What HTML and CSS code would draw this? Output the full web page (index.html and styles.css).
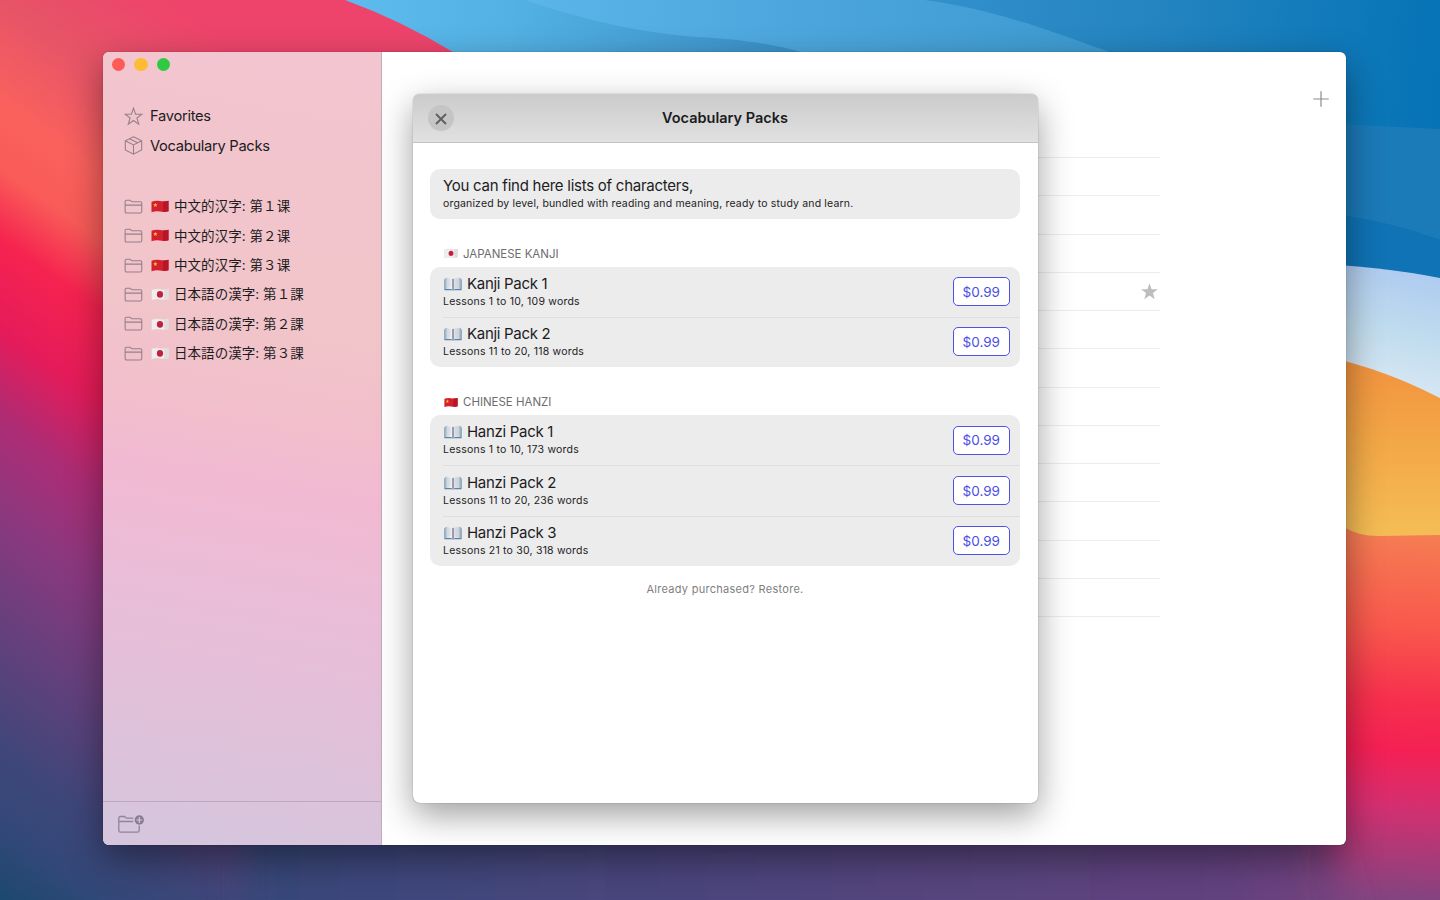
FILE: index.html
```html
<!DOCTYPE html>
<html lang="en">
<head>
<meta charset="utf-8">
<title>Vocabulary Packs</title>
<link rel="stylesheet" href="styles.css">
</head>
<body>
<svg class="defs" width="0" height="0" aria-hidden="true">
  <defs>
    <linearGradient id="page" x1="0" x2="1"><stop offset="0" stop-color="#8fa9c0"/><stop offset=".12" stop-color="#d3dae1"/><stop offset=".4" stop-color="#f4f3f6"/><stop offset=".5" stop-color="#a4a9b6"/><stop offset=".6" stop-color="#e2e2e8"/><stop offset=".88" stop-color="#ced5dd"/><stop offset="1" stop-color="#7f9cb8"/></linearGradient>
  </defs>
  <symbol id="star" viewBox="0 0 20 20"><path d="M10 1.2l2.2 6.3 6.7.1-5.3 4 1.9 6.5L10 14.2l-5.5 3.9 1.9-6.5-5.3-4 6.7-.1z"/></symbol>
  <symbol id="box" viewBox="0 0 20 20"><path d="M10 .8l8.600 4.200v9.700L10 19.200l-8.600-4.500V5zM1.400 5L10 9.400l8.600-4.400M10 9.400v9.800M5.600 2.900l8.700 4.300"/></symbol>
  <symbol id="folder" viewBox="0 0 20 16"><path d="M1.200 13V2.600Q1.200 1.200 2.600 1.200H6.400L8.400 2.800H17.200Q18.700 2.800 18.700 4.300V13Q18.700 14.600 17.200 14.600H2.700Q1.200 14.600 1.200 13zM1.200 6.300H18.700"/></symbol>
  <symbol id="cn" viewBox="0 0 18 13"><path d="M.5 1.800Q5 .2 9 1.100T17.500 .8V11.200Q13 12.400 9 11.600T.5 12.300z" fill="#d3202f"/><path d="M12 1.400V11.800Q14.500 12 17.500 11.200V.8Q14.500 1.500 12 1.400z" fill="#b81626"/><path d="M4.300 2.700l.6 1.500 1.600.1-1.200 1 .4 1.600-1.400-.8-1.300.9.4-1.700-1.200-1 1.500-.1z" fill="#f8c630"/></symbol>
  <symbol id="jp" viewBox="0 0 18 13"><path d="M.5 1.800Q5 .2 9 1.100T17.500 .8V11.200Q13 12.400 9 11.600T.5 12.300z" fill="#f3eeee" stroke="#d6cfd2" stroke-width=".4"/><path d="M13 1.300V11.700L17.500 11.200V.8z" fill="#e3dcdf"/><ellipse cx="9" cy="6.400" rx="3.100" ry="3.300" fill="#c51f40"/></symbol>
  <symbol id="book" viewBox="0 0 18 14"><path d="M.4 2.500L1.300 1.800V11.900Q6 11.200 9 12.600 12 11.200 16.700 11.900V1.800L17.600 2.500V13.200H10L9 13.600 8 13.200H.4z" fill="#5a83a4"/><path d="M1.300.9Q6 .4 9 1.900 12 .4 16.700.9V11.900Q12 11.300 9 12.600 6 11.300 1.300 11.900z" fill="url(#page)"/><path d="M3.600 3h3.600M3.600 5h3.600M3.600 7h3.600M3.600 9h3.600M10.900 3h3.500M10.900 5h3.500M10.900 7h3.500M10.900 9h3.500" stroke="#c3c8d2" stroke-width=".5"/><path d="M9 2V12.600" stroke="#5c6375" stroke-width=".7"/></symbol>
</svg>

<svg class="wallpaper" viewBox="0 0 1440 900" preserveAspectRatio="none" aria-hidden="true">
  <defs>
    <filter id="soft" x="-30%" y="-100%" width="160%" height="300%"><feGaussianBlur stdDeviation="18"/></filter>
    <linearGradient id="left" gradientUnits="userSpaceOnUse" x1="160" y1="0" x2="-470" y2="900">
      <stop offset="0" stop-color="#ee446b"/><stop offset=".084" stop-color="#e65467"/><stop offset=".16" stop-color="#fa615d"/><stop offset=".21" stop-color="#f95b58"/><stop offset=".262" stop-color="#f5234f"/><stop offset=".33" stop-color="#e51b5a"/><stop offset=".395" stop-color="#ad2c74"/><stop offset=".465" stop-color="#8c387f"/><stop offset=".54" stop-color="#6a3f7c"/><stop offset=".64" stop-color="#40467a"/><stop offset=".7" stop-color="#324878"/><stop offset=".755" stop-color="#1c486f"/>
    </linearGradient>
    <linearGradient id="foot" gradientUnits="userSpaceOnUse" x1="0" y1="0" x2="1440" y2="0"><stop offset="0" stop-color="#1b486f"/><stop offset=".12" stop-color="#334878"/><stop offset=".35" stop-color="#44467d"/><stop offset=".85" stop-color="#62437f"/><stop offset="1" stop-color="#85437e"/></linearGradient>
    <linearGradient id="right" gradientUnits="userSpaceOnUse" x1="1440" y1="530" x2="1420" y2="900"><stop offset="0" stop-color="#f57f53"/><stop offset=".27" stop-color="#f9574c"/><stop offset=".46" stop-color="#f6304d"/><stop offset=".6" stop-color="#f42054"/><stop offset=".75" stop-color="#d42f70"/><stop offset="1" stop-color="#83447f"/></linearGradient>
    <linearGradient id="sky" gradientUnits="userSpaceOnUse" x1="345" y1="0" x2="815" y2="60"><stop offset="0" stop-color="#5dbbee"/><stop offset=".35" stop-color="#53b1e3"/><stop offset="1" stop-color="#388dc5"/></linearGradient>
    <linearGradient id="sky2" gradientUnits="userSpaceOnUse" x1="525" y1="0" x2="1120" y2="50"><stop offset="0" stop-color="#5bb5ea"/><stop offset=".5" stop-color="#4ba5dc"/><stop offset="1" stop-color="#3c99cf"/></linearGradient>
    <linearGradient id="sky3" gradientUnits="userSpaceOnUse" x1="925" y1="0" x2="1440" y2="50"><stop offset="0" stop-color="#3390cc"/><stop offset=".5" stop-color="#2183bf"/><stop offset="1" stop-color="#0573b6"/></linearGradient>
    <linearGradient id="ice" gradientUnits="userSpaceOnUse" x1="1400" y1="265" x2="1370" y2="395"><stop offset="0" stop-color="#aecaf0"/><stop offset=".5" stop-color="#c0dcee"/><stop offset="1" stop-color="#dce9f5"/></linearGradient>
    <linearGradient id="gold" gradientUnits="userSpaceOnUse" x1="0" y1="365" x2="0" y2="535"><stop offset="0" stop-color="#f2943f"/><stop offset=".45" stop-color="#f3a746"/><stop offset="1" stop-color="#f5bd55"/></linearGradient>
  </defs>
  <rect width="1440" height="900" fill="url(#left)"/>
  <rect x="1310" y="380" width="130" height="520" fill="url(#right)"/>
  <path d="M240 780H1310Q1330 860 1370 1000H240z" fill="url(#foot)" filter="url(#soft)"/>
  <path d="M345 0Q400 20 453 52L900 300 1440 460V0z" fill="url(#sky)"/>
  <path d="M525 0C590 22 650 35 714 38Q765 41 808 54L900 100H1440V0z" fill="url(#sky2)"/>
  <path d="M925 0C1000 10 1060 35 1115 54L1250 120 1440 460V0z" fill="url(#sky3)"/>
  <path d="M1300 122L1440 129V240Q1390 222 1340 215H1300z" fill="#1b7ab8"/>
  <path d="M1300 210Q1390 219 1440 241V300H1300z" fill="#0f73b5"/>
  <path d="M1300 263Q1380 266 1440 278V420H1300z" fill="url(#ice)"/>
  <path d="M1300 352Q1370 362 1440 398V535L1378 536Q1358 536 1344 527L1300 500z" fill="url(#gold)"/>
</svg>

<main class="window">
  <aside class="sidebar">
    <div class="lights"><i class="light red"></i><i class="light yellow"></i><i class="light green"></i></div>
    <nav class="nav">
      <a class="item"><svg class="icon star"><use href="#star"/></svg><span class="label">Favorites</span></a>
      <a class="item"><svg class="icon"><use href="#box"/></svg><span class="label">Vocabulary Packs</span></a>
    </nav>
    <nav class="nav lists">
      <a class="item" lang="zh"><svg class="icon folder"><use href="#folder"/></svg><svg class="flag"><use href="#cn"/></svg><span class="cjk sc">中文的汉字: 第１课</span></a>
      <a class="item" lang="zh"><svg class="icon folder"><use href="#folder"/></svg><svg class="flag"><use href="#cn"/></svg><span class="cjk sc">中文的汉字: 第２课</span></a>
      <a class="item" lang="zh"><svg class="icon folder"><use href="#folder"/></svg><svg class="flag"><use href="#cn"/></svg><span class="cjk sc">中文的汉字: 第３课</span></a>
      <a class="item" lang="ja"><svg class="icon folder"><use href="#folder"/></svg><svg class="flag"><use href="#jp"/></svg><span class="cjk">日本語の漢字: 第１課</span></a>
      <a class="item" lang="ja"><svg class="icon folder"><use href="#folder"/></svg><svg class="flag"><use href="#jp"/></svg><span class="cjk">日本語の漢字: 第２課</span></a>
      <a class="item" lang="ja"><svg class="icon folder"><use href="#folder"/></svg><svg class="flag"><use href="#jp"/></svg><span class="cjk">日本語の漢字: 第３課</span></a>
    </nav>
    <footer class="side-foot">
      <svg class="add-folder" viewBox="0 0 28 20"><path d="M16.500 4.200H9.500L7.500 2.500H3.300Q1.800 2.500 1.800 4V16.500Q1.800 18.200 3.500 18.200H20.500Q22.200 18.200 22.200 16.500V11.500M1.800 7.500H16.200" fill="none" stroke="#93829a" stroke-width="1.300"/><circle cx="22.300" cy="6" r="4.700" fill="#8b7b91"/><path d="M22.300 3V9M19.300 6H25.300" stroke="#dac5da" stroke-width="1.200"/></svg>
    </footer>
  </aside>
  <section class="content">
    <div class="toolbar"><svg class="plus" viewBox="0 0 16 16"><path d="M8 .3V15.700M.3 8H15.700"/></svg></div>
    <div class="words">
      <div class="word"></div><div class="word"></div><div class="word"></div>
      <div class="word"><svg class="fav"><use href="#star"/></svg></div>
      <div class="word"></div><div class="word"></div><div class="word"></div><div class="word"></div><div class="word"></div><div class="word"></div><div class="word"></div><div class="word"></div>
    </div>
  </section>
  <section class="modal">
    <header class="modal-head">
      <span class="close"><svg viewBox="0 0 12 12"><path d="M1 1L11 11M11 1L1 11"/></svg></span>
      <h1 class="title">Vocabulary Packs</h1>
    </header>
    <div class="modal-body">
      <div class="card intro"><p class="lead">You can find here lists of characters,</p><p class="sub intro-sub">organized by level, bundled with reading and meaning, ready to study and learn.</p></div>
      <h2 class="group"><svg class="flag small"><use href="#jp"/></svg><span>JAPANESE KANJI</span></h2>
      <div class="card">
        <div class="pack"><div><p class="name"><svg class="book"><use href="#book"/></svg>Kanji Pack 1</p><p class="sub">Lessons 1 to 10, 109 words</p></div><button class="price">$0.99</button></div>
        <div class="pack"><div><p class="name"><svg class="book"><use href="#book"/></svg>Kanji Pack 2</p><p class="sub">Lessons 11 to 20, 118 words</p></div><button class="price">$0.99</button></div>
      </div>
      <h2 class="group"><svg class="flag small"><use href="#cn"/></svg><span>CHINESE HANZI</span></h2>
      <div class="card">
        <div class="pack"><div><p class="name"><svg class="book"><use href="#book"/></svg>Hanzi Pack 1</p><p class="sub">Lessons 1 to 10, 173 words</p></div><button class="price">$0.99</button></div>
        <div class="pack"><div><p class="name"><svg class="book"><use href="#book"/></svg>Hanzi Pack 2</p><p class="sub">Lessons 11 to 20, 236 words</p></div><button class="price">$0.99</button></div>
        <div class="pack"><div><p class="name"><svg class="book"><use href="#book"/></svg>Hanzi Pack 3</p><p class="sub">Lessons 21 to 30, 318 words</p></div><button class="price">$0.99</button></div>
      </div>
      <p class="restore">Already purchased? Restore.</p>
    </div>
  </section>
</main>
</body>
</html>
```
FILE: styles.css
```css
* { box-sizing: border-box; }
body { margin: 0; width: 1440px; height: 900px; overflow: hidden; padding: 52px 94px 55px 103px; font-family: Inter, "Liberation Sans", sans-serif; color: #1c1c1e; }
p, h1, h2 { margin: 0; font-weight: 400; }
.defs { position: absolute; }
.wallpaper { position: absolute; inset: 0; width: 1440px; height: 900px; }

.window { position: relative; display: flex; height: 793px; border-radius: 6px; background: #fff; box-shadow: 0 0 1px rgba(0,0,0,.6), 0 14px 36px rgba(0,0,0,.42); }

.sidebar { width: 279px; display: flex; flex-direction: column; border-right: 1px solid #c4abb8; border-radius: 6px 0 0 6px; background: linear-gradient(190deg, #f2c5d1 0%, #f2c5cd 15%, #f1c5c9 34%, #f2bfcc 45%, #f2bad2 54%, #eabdd8 68%, #e0c1da 84%, #d5c6dd 98%); }
.lights { display: flex; gap: 9px; padding: 5.5px 0 0 8.5px; height: 49.5px; }
.light { width: 13.5px; height: 13.5px; border-radius: 50%; }
.red { background: #fc5b57; }
.yellow { background: #fdbc33; }
.green { background: #30c944; }
.nav { display: flex; flex-direction: column; padding-left: 21px; }
.item { display: flex; align-items: center; height: 29.4px; }
.lists { padding-top: 31px; }
.icon { width: 19px; height: 19px; fill: none; stroke: #96808a; stroke-width: 1.15; margin-right: 7px; }
.star { margin-top: 1px; }
.folder { height: 15.5px; margin-top: 1px; }
.label { font-size: 14.7px; letter-spacing: -.3px; }
.flag { width: 18px; height: 13px; margin: 1px 5px 0 1px; }
.cjk { font-family: Inter, "Noto Sans CJK JP", sans-serif; font-size: 13.5px; letter-spacing: .05px; line-height: 20px; white-space: nowrap; padding-top: .5px; }
.sc { font-family: Inter, "Noto Sans CJK SC", sans-serif; }
.side-foot { margin-top: auto; height: 44.5px; border-top: 1px solid #bda9bf; padding: 12px 0 0 14px; }
.add-folder { display: block; width: 28px; height: 20px; }

.content { flex: 1; }
.toolbar { display: flex; justify-content: flex-end; padding: 39px 17px 0 0; height: 105px; }
.plus { width: 16px; height: 16px; fill: none; stroke: #8b8b8b; stroke-width: 1.2; }
.words { width: 592px; margin-left: 186px; border-top: 1px solid #ededed; }
.word { height: 38.25px; border-bottom: 1px solid #ededed; display: flex; justify-content: flex-end; align-items: center; }
.fav { width: 19px; height: 19px; fill: #bdbdbd; margin: 1px 1px 0 0; }

/* Dialog floats over the word list */
.modal { position: absolute; left: 310px; top: 42px; width: 625px; height: 709px; border-radius: 7px; background: #fff; box-shadow: 0 0 1px rgba(0,0,0,.6), 0 12px 34px rgba(0,0,0,.38); }
.modal-head { height: 49px; display: grid; grid-template-columns: 55px 1fr 55px; align-items: center; border-radius: 7px 7px 0 0; border-bottom: 1px solid #c3c3c3; background: linear-gradient(#cbcbcb, #e1e1e1); }
.close { width: 26px; height: 26px; margin-left: 15px; border-radius: 50%; background: #c5c5c5; display: flex; align-items: center; justify-content: center; padding-top: 2px; }
.close svg { width: 12px; height: 12px; fill: none; stroke: #5e5e5e; stroke-width: 1.8; }
.title { text-align: center; font-size: 14.5px; line-height: 20px; font-weight: 600; padding-bottom: 1px; margin-right: 1px; }
.modal-body { padding: 25.5px 18px 0 17px; }
.card { background: #ececec; border-radius: 10px; }
.intro { height: 50px; padding: 7px 13px; }
.lead, .name { font-size: 15px; line-height: 20px; letter-spacing: -.25px; }
.name { display: flex; align-items: center; letter-spacing: -.3px; }
.book { width: 18px; height: 14px; margin: 0 5px 0 1px; }
.sub { font-size: 10.5px; line-height: 16px; letter-spacing: .21px; white-space: nowrap; }
.intro-sub { letter-spacing: .16px; }
.group { display: flex; align-items: center; height: 18px; margin: 26px 0 4px 14px; font-size: 11.5px; color: #6d6d70; }
.card + .group { letter-spacing: -.02px; }
.small { width: 14px; height: 11px; margin: 0 5px 0 0; }
.pack { height: 50.3px; margin-left: 13px; padding: 0 10px 0 0; display: flex; justify-content: space-between; align-items: center; }
.pack + .pack { box-shadow: inset 0 1px #dedede; }
.price { width: 57.5px; height: 29px; padding: 0; border: 1px solid #4f52e4; border-radius: 5px; background: #fff; color: #4a4ee6; font: 13.5px Inter, sans-serif; }
.restore { margin-top: 14px; text-align: center; font-size: 11px; line-height: 18px; letter-spacing: .28px; color: #808080; }
```
